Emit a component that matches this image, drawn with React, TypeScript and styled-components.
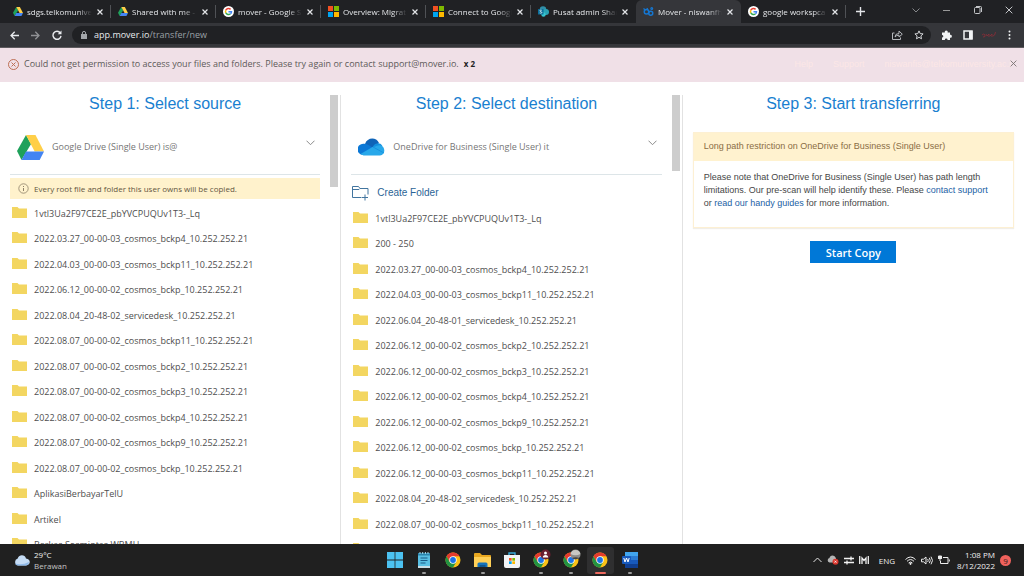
import React from 'react';
import styled, { createGlobalStyle, css } from 'styled-components';

const ui = "'Open Sans', 'Noto Sans', sans-serif";
const arial = "'Liberation Sans', Arial, sans-serif";

const GlobalStyle = createGlobalStyle`
  * { box-sizing: border-box; }
  body { margin: 0; background: #fff; font-family: ${ui}; }
  button { border: 0; padding: 0; background: none; color: inherit; font: inherit; display: flex; align-items: center; justify-content: center; }
  a { color: inherit; text-decoration: none; }
  svg { display: block; flex: none; }
`;

const Page = styled.div`
  height: 100vh;
  display: flex;
  flex-direction: column;
  overflow: hidden;
`;

/* ---------- browser chrome ---------- */

const TabStrip = styled.div`
  display: flex;
  height: 23px;
  padding-left: 6px;
  background: #202124;
  color: #e4e6e9;
`;

const Tab = styled.div<{ $active?: boolean; $divider?: boolean }>`
  flex: 0 1 105px;
  min-width: 0;
  display: flex;
  align-items: center;
  gap: 4px;
  padding-left: 7px;
  &::after {
    content: '';
    width: 1px;
    height: 13px;
    margin-left: 3px;
    background: ${(p) => (p.$divider ? '#505256' : 'transparent')};
  }
  ${(p) =>
    p.$active &&
    css`
      background: #35363a;
      border-radius: 6px 6px 0 0;
    `}
`;

const TabTitle = styled.span`
  flex: 1;
  min-width: 0;
  overflow: hidden;
  white-space: nowrap;
  font-size: 8px;
  font-weight: 500;
  line-height: 12px;
  mask-image: linear-gradient(90deg, #000 78%, transparent);
`;

const TabClose = styled.button`
  width: 7px;
  height: 12px;
`;

const NewTab = styled.button`
  width: 28px;
`;

const WindowButtons = styled.div`
  display: flex;
  margin-left: auto;
`;

const WindowButton = styled.button`
  width: 31px;
  height: 20px;
  color: #c4c6c9;
`;

const Toolbar = styled.div`
  display: flex;
  align-items: center;
  height: 25px;
  padding: 0 4px;
  background: #35363a;
  border-bottom: 1px solid #5d5a5e;
  color: #e8eaed;
`;

const ToolButton = styled.button<{ $dim?: boolean }>`
  width: 21px;
  height: 18px;
  opacity: ${(p) => (p.$dim ? 0.5 : 1)};
`;

const AddressBar = styled.div`
  flex: 1;
  display: flex;
  align-items: center;
  height: 18px;
  margin: 0 5px 0 5px;
  padding: 0 2px 0 9px;
  border-radius: 9px;
  background: #202124;
  font-size: 9px;
  color: #9aa0a6;
`;

const Url = styled.span`
  flex: 1;
  margin-left: 7px;
  line-height: 14px;
  b { font-weight: 400; color: #e8eaed; }
`;

/* ---------- error banner ---------- */

const Banner = styled.div`
  position: relative;
  display: flex;
  align-items: center;
  height: 34px;
  padding: 0 13px 2px 8px;
  background: #f0e0e7;
  color: #5d5a59;
  font-size: 9px;
  line-height: 16px;
  white-space: nowrap;
`;

const BannerText = styled.span`
  margin-left: 5px;
`;

const Count = styled.strong`
  margin-left: 5px;
  color: #222;
  font-size: 8px;
`;

const GhostNav = styled.nav`
  display: flex;
  gap: 20px;
  margin-left: auto;
  color: #fce7e6;
  font-family: ${arial};
`;

const BannerClose = styled.button`
  position: absolute;
  right: 6px;
  top: 11px;
  width: 9px;
  height: 9px;
  color: #77716f;
`;

/* ---------- three step columns ---------- */

const Steps = styled.main`
  flex: 1;
  min-height: 0;
  display: grid;
  grid-template-columns: repeat(3, minmax(0, 1fr));
  grid-template-rows: minmax(0, 1fr);
  padding-top: 13px;
  background: #fff;
`;

const Column = styled.section<{ $last?: boolean }>`
  display: flex;
  gap: 10px;
  padding: ${(p) => (p.$last ? '0 10px' : '0 2px 0 10px')};
  border-right: ${(p) => (p.$last ? '0' : '1px solid #e2e2e2')};
  overflow: hidden;
`;

const ColumnBody = styled.div`
  flex: 1;
  min-width: 0;
`;

const ScrollThumb = styled.div<{ $size: number }>`
  width: 8px;
  height: ${(p) => p.$size}px;
  background: #cdcdcd;
`;

const Title = styled.h2`
  margin: 0;
  color: #1a7fd0;
  font: 400 16px/18px ${arial};
  text-align: center;
`;

const Service = styled.button`
  && {
    display: flex;
    justify-content: flex-start;
    gap: 8px;
    width: 100%;
    height: 55px;
    margin-top: 7px;
    padding: 0 5px 0 7px;
    border-bottom: 1px solid #dde5e8;
    color: #757575;
    font-size: 9px;
    text-align: left;
  }
`;

const ServiceName = styled.span`
  flex: 1;
  line-height: 14px;
`;

const Chevron = styled.svg`
  margin-bottom: 8px;
`;

const Notice = styled.div`
  display: flex;
  align-items: center;
  gap: 5px;
  height: 21px;
  margin: 3px 0 2px;
  padding-left: 8px;
  background: #fff2cc;
  color: #63553f;
  font-size: 8px;
`;

const CreateFolder = styled.button`
  && {
    justify-content: flex-start;
    gap: 8px;
    height: 26px;
    margin-top: 5px;
    padding-left: 1px;
    color: #2a6496;
    font: 400 10px/14px ${arial};
  }
`;

const FolderList = styled.ul`
  display: grid;
  grid-auto-rows: 25px 26px;
  margin: 0;
  padding: 0;
  list-style: none;
`;

const FolderRow = styled.li`
  display: flex;
  align-items: center;
  gap: 7px;
  padding-left: 2px;
  color: #4e4e4e;
  font-size: 9px;
  line-height: 14px;
  white-space: nowrap;
  svg { margin-bottom: 3px; }
`;

const Card = styled.article`
  margin-top: 19px;
  border: 1px solid #fdf0d3;
  box-shadow: 0 1px 1px #f1eee8;
  color: #464646;
  font: 400 9px/13px ${arial};
`;

const CardHeader = styled.h3`
  margin: 0;
  padding: 7px 10px 8px;
  background: #fff2cf;
  color: #8a6d45;
  font: inherit;
`;

const CardText = styled.p`
  margin: 0;
  padding: 10px 20px 17px 10px;
  a { color: #1c62a5; }
`;

const StartButton = styled.button`
  && {
    width: 86px;
    height: 22px;
    margin: 13px auto 0;
    background: #0078d7;
    color: #fff;
    font-size: 11px;
    font-weight: 600;
  }
`;

/* ---------- taskbar ---------- */

const Taskbar = styled.footer`
  display: grid;
  grid-template-columns: 1fr 262px 1fr;
  height: 32px;
  background: #202020;
  color: #f0f0f0;
  font-size: 8px;
  line-height: 11px;
`;

const Weather = styled.div`
  display: flex;
  align-items: center;
  gap: 4px;
  padding-left: 14px;
  span { display: block; color: #c4c4c4; }
`;

const Apps = styled.div`
  display: flex;
  justify-content: space-between;
  align-items: center;
`;

const AppButton = styled.button<{ $mark?: 'open' | 'current' }>`
  && {
    position: relative;
    width: 27px;
    height: 27px;
    border-radius: 3px;
    background: ${(p) => (p.$mark === 'current' ? '#2f2f30' : 'none')};
  }
  &::after {
    content: '';
    position: absolute;
    bottom: 0;
    width: ${(p) => (p.$mark === 'current' ? '11px' : '4px')};
    height: 2px;
    border-radius: 1px;
    background: ${(p) => (p.$mark === 'current' ? '#ee6a5f' : p.$mark ? '#9b9b9b' : 'transparent')};
  }
`;

const Tray = styled.div`
  display: flex;
  justify-content: flex-end;
  align-items: center;
  gap: 5px;
  padding-right: 13px;
`;

const Language = styled.span`
  margin: 0 5px;
`;

const Clock = styled.time`
  margin-left: 2px;
  text-align: right;
`;

const Badge = styled.span`
  width: 11px;
  height: 11px;
  border-radius: 6px;
  background: #f0625c;
  color: #33201f;
  text-align: center;
`;

/* ---------- drawings ---------- */

const Cross = ({ size = 6, w = 1.2 }: { size?: number; w?: number }) => (
  <svg width={size} height={size} viewBox="0 0 8 8" stroke="currentColor" strokeWidth={w} fill="none">
    <path d="M.7.7l6.6 6.6M7.3.7L.7 7.3" />
  </svg>
);

const DriveLogo = ({ w = 27, h = 25 }: { w?: number; h?: number }) => (
  <svg width={w} height={h} viewBox="0 0 27 25" preserveAspectRatio="none">
    <path d="M9 0L0 16l4.5 9L14 9z" fill="#1fa15b" />
    <path d="M9 0h9.500L27 16.500h-9.300z" fill="#ffcf48" />
    <path d="M9 16.500h18L22.700 25H4.500z" fill="#4384f3" />
  </svg>
);

const GoogleLogo = () => (
  <svg width="11" height="11" viewBox="0 0 22 22">
    <circle cx="11" cy="11" r="11" fill="#fff" />
    <g fill="none" strokeWidth="3">
      <path d="M15.200 6.800A6 6 0 0 0 5.600 8.400" stroke="#ea4335" />
      <path d="M5.600 8.400a6 6 0 0 0 0 5.200" stroke="#fbbc05" />
      <path d="M5.600 13.600a6 6 0 0 0 9.400 2" stroke="#34a853" />
      <path d="M15 15.600a6 6 0 0 0 2-4.300h-6" stroke="#4285f4" />
    </g>
  </svg>
);

const MicrosoftLogo = () => (
  <svg width="11" height="11" viewBox="0 0 11 11">
    <path fill="#f25022" d="M0 0h5v5H0z" />
    <path fill="#7fba00" d="M6 0h5v5H6z" />
    <path fill="#00a4ef" d="M0 6h5v5H0z" />
    <path fill="#ffb900" d="M6 6h5v5H6z" />
  </svg>
);

const SharePointLogo = () => (
  <svg width="11" height="11" viewBox="0 0 22 22">
    <circle cx="10" cy="7" r="6.500" fill="#2f8fa8" />
    <circle cx="16" cy="12" r="6" fill="#2aa3b5" />
    <circle cx="11" cy="17" r="4.500" fill="#37c6d0" />
    <rect y="6" width="11" height="11" rx="1" fill="#0b6f9c" />
    <path d="M7.700 8.700c-2-1-4-.5-4 .9 0 2 4 1.500 4 3.300 0 1.500-2.500 1.800-4.300.9" stroke="#fff" strokeWidth="1.500" fill="none" />
  </svg>
);

const MoverLogo = () => (
  <svg width="11" height="11" viewBox="0 0 22 22" fill="none" stroke="#1577d2">
    <circle cx="7" cy="11.500" r="4.500" strokeWidth="3" />
    <circle cx="15.500" cy="14.500" r="4" strokeWidth="3" />
    <circle cx="17.500" cy="5" r="1.800" strokeWidth="2.400" />
    <path d="M1 5l3 2.500M9 4l-1 3" strokeWidth="2.500" />
  </svg>
);

const OneDriveLogo = () => (
  <svg width="27" height="18" viewBox="0 0 27 18">
    <path d="M7 6C9-.500 18-1.500 21 5l-6 5-8-1z" fill="#0f64b8" />
    <path d="M5 17a5.600 5.600 0 0 1 .3-11.200c2.700-.3 4 .6 5.500 1.500l6 3.700L8 17z" fill="#0b78d6" />
    <path d="M15 8.500C17 5 22 4 24 7.500L25 12l-10 .5z" fill="#1490df" />
    <path d="M2.500 16L15 8.800c2 .5 4-1.800 7-1.600 5.500.8 6 9.300 0 10.300H5.500z" fill="#28a8ea" />
    <path d="M15 9l11 6" stroke="#1793df" />
  </svg>
);

const FolderIcon = () => (
  <svg width="15" height="11" viewBox="0 0 15 11">
    <path d="M0 0h5.500L7 1.500h8V11H0z" fill="#f3d661" />
  </svg>
);

const ChevronDown = () => (
  <Chevron width="9" height="6" viewBox="0 0 9 6" fill="none" stroke="#8b8b8b">
    <path d="M.5.7l4 4 4-4" />
  </Chevron>
);

const ChromeLogo = () => (
  <>
    <circle cx="8" cy="8" r="7.500" fill="#fbc116" />
    <path d="M1.500 4.250A7.500 7.500 0 0 1 14.500 4.250H8L4.750 9.900z" fill="#e33b2e" />
    <path d="M1.500 4.250A7.500 7.500 0 0 0 8 15.500l3.250-5.600H4.750z" fill="#229342" />
    <circle cx="8" cy="8" r="3.700" fill="#fff" />
    <circle cx="8" cy="8" r="2.900" fill="#1a73e8" />
  </>
);

const Chrome = ({ overlay }: { overlay?: React.ReactNode }) => (
  <svg width="16" height="16" viewBox="0 0 16 16" overflow="visible">
    <ChromeLogo />
    {overlay}
  </svg>
);

const StartLogo = () => (
  <svg width="16" height="16" viewBox="0 0 16 16" fill="#4cc2f1">
    <path d="M0 0h7.600v7.600H0zM8.400 0H16v7.600H8.400zM0 8.400h7.600V16H0zM8.400 8.400H16V16H8.400z" />
  </svg>
);

const Notepad = () => (
  <svg width="14" height="16" viewBox="0 0 14 16">
    <rect x="1" y="1" width="12" height="15" rx="1" fill="#59bfe3" />
    <path d="M1 1h12v2.500H1z" fill="#2b85ad" />
    <path d="M3.500 6h7M3.500 8.500h7M3.500 11h5" stroke="#185a86" strokeWidth="1.100" />
    <path d="M1 14h12v2H1z" fill="#c8dce5" />
    <path d="M3 0v2M5.700 0v2M8.400 0v2M11 0v2" stroke="#a7dcef" />
  </svg>
);

const Explorer = () => (
  <svg width="17" height="16" viewBox="0 0 17 16">
    <path d="M0 2q0-1 1-1h5l2 2h8q1 0 1 1v4H0z" fill="#e9a820" />
    <path d="M0 5h17v10H0z" fill="#ffd057" />
    <path d="M3.500 15v-3q0-1.500 1.500-1.500h7q1.500 0 1.500 1.500v3z" fill="#1673ba" />
    <path d="M5.500 13h6v2h-6z" fill="#0f558f" />
  </svg>
);

const Store = () => (
  <svg width="16" height="16" viewBox="0 0 16 16">
    <path d="M5 4V1h6v3" fill="none" stroke="#38a9d8" strokeWidth="1.400" />
    <path d="M0 3h16v11q0 2-2 2H2q-2 0-2-2z" fill="#f2f4f6" />
    <path fill="#f25022" d="M5 6h2.700v2.700H5z" />
    <path fill="#7fba00" d="M8.300 6H11v2.700H8.300z" />
    <path fill="#00a4ef" d="M5 9.300h2.700V12H5z" />
    <path fill="#ffb900" d="M8.300 9.300H11V12H8.300z" />
  </svg>
);

const Word = () => (
  <svg width="16" height="16" viewBox="0 0 16 16">
    <rect x="3" y="0" width="13" height="16" rx="1" fill="#2b7cd3" />
    <path d="M3 0h13v4H3z" fill="#41a5ee" />
    <path d="M3 8h13v4H3z" fill="#185abd" />
    <path d="M3 12h13v4H3z" fill="#103f91" />
    <rect y="4" width="9" height="8" rx="1" fill="#185abd" />
    <path d="M1.800 6l1.200 4 1.500-4L6 10l1.200-4" fill="none" stroke="#fff" />
  </svg>
);

/* ---------- data ---------- */

const tabs = [
  { title: 'sdgs.telkomunive', icon: <DriveLogo w={10} h={9} />, divider: true },
  { title: 'Shared with me -', icon: <DriveLogo w={10} h={9} />, divider: true },
  { title: 'mover - Google S', icon: <GoogleLogo />, divider: true },
  { title: 'Overview: Migrat', icon: <MicrosoftLogo />, divider: true },
  { title: 'Connect to Googl', icon: <MicrosoftLogo />, divider: true },
  { title: 'Pusat admin Shar', icon: <SharePointLogo /> },
  { title: 'Mover - niswanfh', icon: <MoverLogo />, active: true },
  { title: 'google workspca', icon: <GoogleLogo />, divider: true },
];

const sourceFolders = [
  '1vtl3Ua2F97CE2E_pbYVCPUQUv1T3-_Lq',
  '2022.03.27_00-00-03_cosmos_bckp4_10.252.252.21',
  '2022.04.03_00-00-03_cosmos_bckp11_10.252.252.21',
  '2022.06.12_00-00-02_cosmos_bckp_10.252.252.21',
  '2022.08.04_20-48-02_servicedesk_10.252.252.21',
  '2022.08.07_00-00-02_cosmos_bckp11_10.252.252.21',
  '2022.08.07_00-00-02_cosmos_bckp2_10.252.252.21',
  '2022.08.07_00-00-02_cosmos_bckp3_10.252.252.21',
  '2022.08.07_00-00-02_cosmos_bckp4_10.252.252.21',
  '2022.08.07_00-00-02_cosmos_bckp9_10.252.252.21',
  '2022.08.07_00-00-02_cosmos_bckp_10.252.252.21',
  'AplikasiBerbayarTelU',
  'Artikel',
  'Berkas Sosmintas WBMU',
];

const destinationFolders = [
  '1vtl3Ua2F97CE2E_pbYVCPUQUv1T3-_Lq',
  '200 - 250',
  '2022.03.27_00-00-03_cosmos_bckp4_10.252.252.21',
  '2022.04.03_00-00-03_cosmos_bckp11_10.252.252.21',
  '2022.06.04_20-48-01_servicedesk_10.252.252.21',
  '2022.06.12_00-00-02_cosmos_bckp2_10.252.252.21',
  '2022.06.12_00-00-02_cosmos_bckp3_10.252.252.21',
  '2022.06.12_00-00-02_cosmos_bckp4_10.252.252.21',
  '2022.06.12_00-00-02_cosmos_bckp9_10.252.252.21',
  '2022.06.12_00-00-02_cosmos_bckp_10.252.252.21',
  '2022.06.12_00-00-03_cosmos_bckp11_10.252.252.21',
  '2022.08.04_20-48-02_servicedesk_10.252.252.21',
  '2022.08.07_00-00-02_cosmos_bckp11_10.252.252.21',
  '2022.08.07_00-00-02_cosmos_bckp2_10.252.252.21',
];

const Folders = ({ names }: { names: string[] }) => (
  <FolderList>
    {names.map((name) => (
      <FolderRow key={name}>
        <FolderIcon />
        {name}
      </FolderRow>
    ))}
  </FolderList>
);

export default function App() {
  return (
    <Page>
      <GlobalStyle />
      <TabStrip>
        {tabs.map((t) => (
          <Tab key={t.title} $active={t.active} $divider={t.divider}>
            {t.icon}
            <TabTitle>{t.title}</TabTitle>
            <TabClose aria-label="Close tab"><Cross w={1.6} /></TabClose>
          </Tab>
        ))}
        <NewTab aria-label="New tab">
          <svg width="9" height="9" viewBox="0 0 9 9" stroke="currentColor" strokeWidth="1.400"><path d="M4.500 0v9M0 4.500h9" /></svg>
        </NewTab>
        <WindowButtons>
          <WindowButton aria-label="Search tabs">
            <svg width="8" height="5" viewBox="0 0 8 5" fill="none" stroke="#85878a"><path d="M.5.5L4 4 7.500.5" /></svg>
          </WindowButton>
          <WindowButton aria-label="Minimize">
            <svg width="7" height="1" viewBox="0 0 7 1" stroke="#999"><path d="M0 .5h7" /></svg>
          </WindowButton>
          <WindowButton aria-label="Restore">
            <svg width="8" height="8" viewBox="0 0 8 8" fill="none" stroke="currentColor"><rect x=".5" y="1.500" width="5.500" height="6" rx="1" /><path d="M2 .5h4.500q1 0 1 1V6" /></svg>
          </WindowButton>
          <WindowButton aria-label="Close"><Cross size={8} w={1} /></WindowButton>
        </WindowButtons>
      </TabStrip>

      <Toolbar>
        <ToolButton aria-label="Back">
          <svg width="9" height="9" viewBox="0 0 9 9" fill="none" stroke="currentColor" strokeWidth="1.300"><path d="M9 4.500H1M4.700.700L1 4.500l3.700 3.800" /></svg>
        </ToolButton>
        <ToolButton aria-label="Forward" $dim>
          <svg width="9" height="9" viewBox="0 0 9 9" fill="none" stroke="currentColor" strokeWidth="1.300"><path d="M0 4.500h8M4.300.700L8 4.500 4.300 8.300" /></svg>
        </ToolButton>
        <ToolButton aria-label="Reload">
          <svg width="10" height="10" viewBox="0 0 10 10" fill="none" stroke="currentColor" strokeWidth="1.400"><path d="M8.300 3A4 4 0 1 0 9 5.800" /><path d="M9.500.500v3.800H5.700z" fill="currentColor" stroke="none" /></svg>
        </ToolButton>
        <AddressBar>
          <svg width="6" height="8" viewBox="0 0 6 8"><path d="M0 3h6v5H0z" fill="#a3a6aa" /><path d="M1.400 3.500V2a1.600 1.600 0 0 1 3.200 0v1.500" fill="none" stroke="#a3a6aa" /></svg>
          <Url><b>app.mover.io</b>/transfer/new</Url>
          <ToolButton aria-label="Share">
            <svg width="11" height="10" viewBox="0 0 11 10" fill="none" stroke="#b4b7bb"><path d="M2.500 3H.500v6.500h8V7.500" /><path d="M3 7q0-3.500 4-3.500V1l3.300 3.200L7 7V5.200Q4.500 5 3 7z" /></svg>
          </ToolButton>
          <ToolButton aria-label="Bookmark">
            <svg width="10" height="10" viewBox="0 0 10 10" fill="none" stroke="#d3d5d8"><path d="M5 .9l1.200 2.700 2.900.3-2.200 2 .6 2.900L5 7.300 2.500 8.800l.6-2.900-2.200-2 2.900-.3z" /></svg>
          </ToolButton>
        </AddressBar>
        <ToolButton aria-label="Extensions">
          <svg width="10" height="10" viewBox="0 0 10 10" fill="#f1f3f4"><path d="M0 2.500h2.800a1.500 1.500 0 1 1 2.900 0H8v2.300a1.500 1.500 0 1 1 0 2.900V10H5.600a1.400 1.400 0 0 0-2.800 0H0V7.500a1.300 1.300 0 0 0 0-2.600z" /></svg>
        </ToolButton>
        <ToolButton aria-label="Side panel">
          <svg width="10" height="10" viewBox="0 0 10 10"><path d="M1 1h8v8H1z" fill="#35363a" stroke="#f1f3f4" strokeWidth="1.500" /><path d="M6 1h3.500v8H6z" fill="#f1f3f4" /></svg>
        </ToolButton>
        <ToolButton aria-label="Profile">
          <svg width="14" height="8" viewBox="0 0 14 8" fill="none" stroke="#8e2d37" strokeWidth=".8"><path d="M0 4q2-2 3 0t-2 2M4 3l1 2 2-2v3M8 5l2-2v3M11 5q2 0 2.500-4" /></svg>
        </ToolButton>
        <ToolButton aria-label="Menu">
          <svg width="3" height="10" viewBox="0 0 3 10" fill="#f1f3f4"><circle cx="1.500" cy="1.500" r="1" /><circle cx="1.500" cy="5" r="1" /><circle cx="1.500" cy="8.500" r="1" /></svg>
        </ToolButton>
      </Toolbar>

      <Banner role="alert">
        <svg width="11" height="11" viewBox="0 0 11 11" fill="none" stroke="#bd6f55"><circle cx="5.500" cy="5.500" r="5" /><path d="M3.500 3.500l4 4M7.500 3.500l-4 4" /></svg>
        <BannerText>Could not get permission to access your files and folders. Please try again or contact support@mover.io.</BannerText>
        <Count>x 2</Count>
        <GhostNav>
          <a href="#help">Help</a>
          <a href="#support">Support</a>
          <a href="#account">niswanfis@telkomuniversity.ac.i</a>
        </GhostNav>
        <BannerClose aria-label="Dismiss"><Cross size={7} w={1} /></BannerClose>
      </Banner>

      <Steps>
        <Column>
          <ColumnBody>
            <Title>Step 1: Select source</Title>
            <Service>
              <DriveLogo />
              <ServiceName>Google Drive (Single User) is@</ServiceName>
              <ChevronDown />
            </Service>
            <Notice>
              <svg width="11" height="11" viewBox="0 0 11 11" fill="none" stroke="#8d8068"><circle cx="5.500" cy="5.500" r="4.700" strokeWidth=".8" /><path d="M5.500 5v3M5.500 3v1" /></svg>
              Every root file and folder this user owns will be copied.
            </Notice>
            <Folders names={sourceFolders} />
          </ColumnBody>
          <ScrollThumb $size={92} />
        </Column>
        <Column>
          <ColumnBody>
            <Title>Step 2: Select destination</Title>
            <Service>
              <OneDriveLogo />
              <ServiceName>OneDrive for Business (Single User) it</ServiceName>
              <ChevronDown />
            </Service>
            <CreateFolder>
              <svg width="17" height="15" viewBox="0 0 17 15" fill="none" stroke="#42759f"><path d="M9.500 11.500H.500V.500h6l1.500 2h8v6M.500 3.500H7l1-1M13 8.500v6M10 11.500h6" /></svg>
              Create Folder
            </CreateFolder>
            <Folders names={destinationFolders} />
          </ColumnBody>
          <ScrollThumb $size={76} />
        </Column>
        <Column $last>
          <ColumnBody>
            <Title>Step 3: Start transferring</Title>
            <Card>
              <CardHeader>Long path restriction on OneDrive for Business (Single User)</CardHeader>
              <CardText>
                Please note that OneDrive for Business (Single User) has path length limitations. Our pre-scan will help identify these. Please{' '}
                <a href="#support">contact support</a> or <a href="#guides">read our handy guides</a> for more information.
              </CardText>
            </Card>
            <StartButton>Start Copy</StartButton>
          </ColumnBody>
        </Column>
      </Steps>

      <Taskbar>
        <Weather>
          <svg width="16" height="11" viewBox="0 0 16 11"><path d="M4 10.500a3.600 3.600 0 0 1-.3-7C5-.800 11-.800 12 3.500c5 .3 5 7 0 7z" fill="#c5dcf5" /><path d="M1 8.500q7 2 14-1.500-.5 3.500-3.500 3.500H4q-2.500 0-3-2z" fill="#8fb9e8" /></svg>
          <div>29°C<span>Berawan</span></div>
        </Weather>
        <Apps>
          <AppButton aria-label="Start"><StartLogo /></AppButton>
          <AppButton aria-label="Notepad" $mark="open"><Notepad /></AppButton>
          <AppButton aria-label="Chrome"><Chrome /></AppButton>
          <AppButton aria-label="File Explorer" $mark="open"><Explorer /></AppButton>
          <AppButton aria-label="Microsoft Store"><Store /></AppButton>
          <AppButton aria-label="Chrome, profile one" $mark="open">
            <Chrome overlay={<g><circle cx="12.500" cy="2.500" r="5" fill="#6b1f30" /><circle cx="12.500" cy="1" r="1.500" fill="#fff" /><path d="M9.800 5.500q0-2.500 2.700-2.500t2.700 2.500z" fill="#fff" /></g>} />
          </AppButton>
          <AppButton aria-label="Chrome, profile two" $mark="open">
            <Chrome overlay={<g><circle cx="12.500" cy="2.500" r="5" fill="#8c8c8a" /><path d="M7.600 2a5 5 0 0 1 9.800 0q-5 2.500-9.800 0z" fill="#c8c7c3" /><path d="M9 6q3 2.500 7 0-3-1.500-7 0z" fill="#444" /></g>} />
          </AppButton>
          <AppButton aria-label="Chrome, profile three" $mark="current"><Chrome /></AppButton>
          <AppButton aria-label="Word" $mark="open"><Word /></AppButton>
        </Apps>
        <Tray>
          <svg width="9" height="6" viewBox="0 0 9 6" fill="none" stroke="#e6e6e6"><path d="M.5 5l4-4 4 4" /></svg>
          <svg width="12" height="10" viewBox="0 0 12 10"><path d="M2.500 7.500A2.300 2.300 0 0 1 2.500 3C3-.500 8-.500 9 3.500v4z" fill="#b5b5b5" /><circle cx="8.500" cy="6.700" r="3" fill="#d9352c" /><path d="M7.500 5.700l2 2M9.500 5.700l-2 2" stroke="#fff" strokeWidth=".8" /></svg>
          <svg width="10" height="9" viewBox="0 0 10 9" fill="none" stroke="#f2f2f2" strokeWidth="1.300"><path d="M0 2.500h10M0 6.500h10M7 .5v4M3 4.500v4" /></svg>
          <svg width="10" height="8" viewBox="0 0 10 8" fill="none" stroke="#f2f2f2" strokeWidth="1.300"><path d="M.7 0v8M9.300 0v8M3 8V2l2 2.500L7 2v6" /></svg>
          <Language>ENG</Language>
          <svg width="11" height="9" viewBox="0 0 11 9" fill="none" stroke="#ededed"><path d="M.5 3.500q5-5 10 0M2 5.300q3.500-3.500 7 0M3.600 7q1.900-2 3.800 0" /><circle cx="5.500" cy="7.800" r=".7" fill="#fff" /></svg>
          <svg width="12" height="9" viewBox="0 0 12 9" fill="none" stroke="#ededed"><path d="M.5 3.200h2L5 1v7L2.500 5.800h-2zM6.700 3q1 1.500 0 3M8.300 1.800q2 2.700 0 5.400M10 .7q3 3.800 0 7.600" /></svg>
          <svg width="12" height="10" viewBox="0 0 12 10" fill="none" stroke="#ededed"><path d="M5 2.500h5v6H2.500V6M11.300 4.500v2M.5 1v2.500h3V1M2 3.500V6" /><path d="M.5 1h3v2.500h-3z" fill="#ededed" /></svg>
          <Clock>1:08 PM<br />8/12/2022</Clock>
          <Badge>9</Badge>
        </Tray>
      </Taskbar>
    </Page>
  );
}
